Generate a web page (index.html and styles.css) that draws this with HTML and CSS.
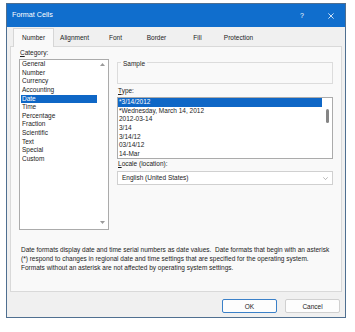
FILE: index.html
```html
<!DOCTYPE html>
<html>
<head>
<meta charset="utf-8">
<link rel="stylesheet" href="styles.css">
</head>
<body>
<div class="dialog">
  <div class="titlebar">
    <span class="title">Format Cells</span>
    <span class="tb-btn help">?</span>
    <span class="tb-btn close"><svg width="6" height="6" viewBox="0 0 6 6"><path d="M0.4 0.4L5.6 5.6M5.6 0.4L0.4 5.6" stroke="#fff" stroke-width="0.8" fill="none"/></svg></span>
  </div>
  <div class="tabs">
    <div class="tab active">Number</div>
    <div class="tab">Alignment</div>
    <div class="tab">Font</div>
    <div class="tab">Border</div>
    <div class="tab">Fill</div>
    <div class="tab">Protection</div>
  </div>
  <div class="panel">
    <div class="columns">
      <div class="col-left">
        <div class="label"><u>C</u>ategory:</div>
        <div class="listbox cat">
          <ul class="items">
            <li>General</li>
            <li>Number</li>
            <li>Currency</li>
            <li>Accounting</li>
            <li class="sel">Date</li>
            <li>Time</li>
            <li>Percentage</li>
            <li>Fraction</li>
            <li>Scientific</li>
            <li>Text</li>
            <li>Special</li>
            <li>Custom</li>
          </ul>
          <div class="vscroll">
            <svg width="5" height="3" viewBox="0 0 5 3"><path d="M0 3L2.5 0L5 3Z" fill="#9a9a9a"/></svg>
            <svg width="5" height="3" viewBox="0 0 5 3"><path d="M0 0L2.5 3L5 0Z" fill="#9a9a9a"/></svg>
          </div>
        </div>
      </div>
      <div class="col-right">
        <fieldset class="sample"><legend>Sample</legend><div class="sample-body"></div></fieldset>
        <div class="label type-label"><u>T</u>ype:</div>
        <div class="listbox types">
          <ul class="items">
            <li class="sel">*3/14/2012</li>
            <li>*Wednesday, March 14, 2012</li>
            <li>2012-03-14</li>
            <li>3/14</li>
            <li>3/14/12</li>
            <li>03/14/12</li>
            <li>14-Mar</li>
          </ul>
          <div class="thin-scroll"><div class="thumb"></div></div>
        </div>
        <div class="label locale-label"><u>L</u>ocale (location):</div>
        <div class="combo">
          <span>English (United States)</span>
          <svg width="5" height="3" viewBox="0 0 5 3"><path d="M0.3 0.3L2.5 2.6L4.7 0.3" stroke="#8a8a8a" stroke-width="0.6" fill="none"/></svg>
        </div>
      </div>
    </div>
    <p class="desc">Date formats display date and time serial numbers as date values.&nbsp; Date formats that begin with an asterisk<br>(*) respond to changes in regional date and time settings that are specified for the operating system.<br>Formats without an asterisk are not affected by operating system settings.</p>
  </div>
  <div class="footer">
    <button class="btn ok">OK</button>
    <button class="btn">Cancel</button>
  </div>
</div>
</body>
</html>
```

FILE: styles.css
```css
* { box-sizing: border-box; }
html, body { margin: 0; padding: 0; background: #ffffff; }
body {
  font-family: "Liberation Sans", Arial, sans-serif;
  font-size: 6.5px;
  color: #1b1b1b;
}
.dialog {
  margin: 3px 0 0 6px;
  width: 340px;
  height: 315px;
  border: 1px solid #4f6f90;
  background: #f0f0f0;
  display: flex;
  flex-direction: column;
}
.titlebar {
  height: 23px;
  flex: none;
  background: #106ecd;
  color: #ffffff;
  display: flex;
  align-items: center;
  padding: 0 0 2px 5px;
}
.title { font-size: 7.2px; flex: 1; }
.tb-btn {
  height: 100%;
  display: flex;
  align-items: center;
  justify-content: center;
  padding-top: 2px;
}
.help { width: 28px; font-size: 7px; }
.close { width: 29px; }
.tabs {
  height: 20px;
  flex: none;
  display: flex;
  padding: 1px 0 0 6px;
  margin-bottom: -1px;
}
.tab {
  width: 41px;
  height: 19px;
  line-height: 17px;
  padding-bottom: 2px;
  text-align: center;
  border: 1px solid transparent;
  border-bottom: none;
}
.tab.active {
  background: #f9f9f9;
  border-color: #d6d6d6;
  position: relative;
  z-index: 1;
}
.panel {
  flex: none;
  height: 246px;
  margin: 0 3px;
  border: 1px solid #d9d9d9;
  background: #f9f9f9;
  padding: 1px 7px 0 8px;
}
.columns { display: flex; gap: 8px; }
.col-left { width: 90px; display: flex; flex-direction: column; }
.col-right { width: 216px; display: flex; flex-direction: column; }
.label { line-height: 9px; height: 9px; margin-bottom: 2px; padding-left: 1px; }
.locale-label { margin-bottom: 3px; }
.type-label { margin-top: 2px; }
.listbox {
  background: #ffffff;
  border: 1px solid #ababab;
  display: flex;
}
.items { list-style: none; margin: 0; padding: 0; }
.items li { line-height: 8.65px; height: 8.65px; white-space: nowrap; padding-left: 1px; }
.items li.sel { background: #0f67c6; color: #ffffff; }
.cat { height: 171px; }
.cat .items { width: 76px; margin-left: 1px; }
.vscroll {
  flex: 1;
  display: flex;
  flex-direction: column;
  align-items: center;
  justify-content: space-between;
  padding: 3px 0 5px;
}
.types { height: 62px; }
.types .items { width: 204px; }
.thin-scroll { flex: 1; display: flex; justify-content: center; padding-top: 11px; }
.thumb { width: 3px; height: 14px; background: #858585; border-radius: 1.5px; }
.sample {
  margin: 8px 0 0;
  padding: 0 0 0 3px;
  border: 1px solid #dcdcdc;
  min-inline-size: 0;
}
.sample legend { padding: 4px 2px 0; line-height: 8px; font-size: 6.5px; }
.sample-body { height: 15px; }
.combo {
  height: 14px;
  background: #ffffff;
  border: 1px solid #d0d0d0;
  display: flex;
  align-items: center;
  justify-content: space-between;
  padding: 0 4px 0 4px;
  line-height: 12px;
}
.desc {
  margin: 15px 0 0 2px;
  line-height: 9px;
  white-space: nowrap;
}
.footer {
  flex: 1;
  display: flex;
  justify-content: flex-end;
  align-items: flex-start;
  gap: 8px;
  padding: 7px 5px 0 0;
}
.btn {
  width: 55px;
  height: 14px;
  padding: 0;
  font-family: inherit;
  font-size: 6.5px;
  color: #1b1b1b;
  background: #fdfdfd;
  border: 1px solid #d0d0d0;
  border-radius: 2px;
}
.btn.ok { border-color: #3a80c8; }
```
